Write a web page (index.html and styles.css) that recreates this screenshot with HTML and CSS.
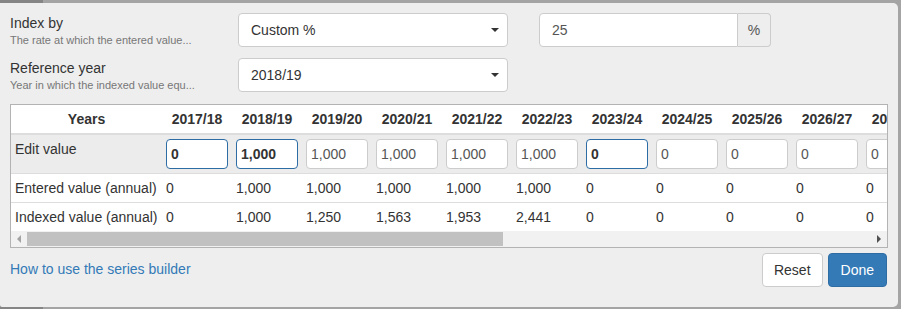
FILE: index.html
```html
<!DOCTYPE html>
<html lang="en">
<head>
    <meta charset="UTF-8">
    <meta name="viewport" content="width=device-width, initial-scale=1.0">
    <title>Series builder</title>
    <link rel="stylesheet" href="styles.css">
</head>
<body>
    <div class="modal">
        <div class="settings">
            <div class="form-row">
                <div class="field-label">
                    <div class="label-title">Index by</div>
                    <div class="label-help">The rate at which the entered value...</div>
                </div>
                <div class="select-box">
                    <select>
                        <option>Custom %</option>
                    </select>
                </div>
                <div class="input-group">
                    <input type="text" class="form-input" value="25">
                    <span class="input-addon">%</span>
                </div>
            </div>
            <div class="form-row">
                <div class="field-label">
                    <div class="label-title">Reference year</div>
                    <div class="label-help">Year in which the indexed value equ...</div>
                </div>
                <div class="select-box">
                    <select>
                        <option>2018/19</option>
                    </select>
                </div>
            </div>
        </div>

        <div class="series-table">
            <div class="table-scroll">
                <table>
                    <thead>
                        <tr>
                            <th class="row-head">Years</th>
                            <th>2017/18</th>
                            <th>2018/19</th>
                            <th>2019/20</th>
                            <th>2020/21</th>
                            <th>2021/22</th>
                            <th>2022/23</th>
                            <th>2023/24</th>
                            <th>2024/25</th>
                            <th>2025/26</th>
                            <th>2026/27</th>
                            <th>2027/28</th>
                        </tr>
                    </thead>
                    <tbody>
                        <tr class="edit-row">
                            <td>Edit value</td>
                            <td><input class="cell-input edited" value="0"></td>
                            <td><input class="cell-input edited" value="1,000"></td>
                            <td><input class="cell-input" value="1,000"></td>
                            <td><input class="cell-input" value="1,000"></td>
                            <td><input class="cell-input" value="1,000"></td>
                            <td><input class="cell-input" value="1,000"></td>
                            <td><input class="cell-input edited" value="0"></td>
                            <td><input class="cell-input" value="0"></td>
                            <td><input class="cell-input" value="0"></td>
                            <td><input class="cell-input" value="0"></td>
                            <td><input class="cell-input" value="0"></td>
                        </tr>
                        <tr>
                            <td>Entered value (annual)</td>
                            <td>0</td>
                            <td>1,000</td>
                            <td>1,000</td>
                            <td>1,000</td>
                            <td>1,000</td>
                            <td>1,000</td>
                            <td>0</td>
                            <td>0</td>
                            <td>0</td>
                            <td>0</td>
                            <td>0</td>
                        </tr>
                        <tr>
                            <td>Indexed value (annual)</td>
                            <td>0</td>
                            <td>1,000</td>
                            <td>1,250</td>
                            <td>1,563</td>
                            <td>1,953</td>
                            <td>2,441</td>
                            <td>0</td>
                            <td>0</td>
                            <td>0</td>
                            <td>0</td>
                            <td>0</td>
                        </tr>
                    </tbody>
                </table>
            </div>
            <div class="scrollbar">
                <span class="scroll-arrow arrow-left"></span>
                <div class="scroll-track">
                    <div class="scroll-thumb"></div>
                </div>
                <span class="scroll-arrow arrow-right"></span>
            </div>
        </div>

        <div class="footer">
            <a href="#" class="help-link">How to use the series builder</a>
            <div class="footer-buttons">
                <button class="btn btn-default">Reset</button>
                <button class="btn btn-primary">Done</button>
            </div>
        </div>
    </div>
</body>
</html>
```

FILE: styles.css
```css
* {
    box-sizing: border-box;
}
body {
    margin: 0;
    font-family: "Liberation Sans", Arial, sans-serif;
    font-size: 14px;
    color: #333;
    background: linear-gradient(to right, #858585 43px, #a4a4a4 43px);
    height: 309px;
    overflow: hidden;
}
.modal {
    margin: 3px 3px 0 0;
    height: 304px;
    background: #eee;
    border-radius: 0 5px 5px 2px;
    padding: 10px 10px 0 10px;
}
.settings {
    margin-bottom: 12px;
}
.form-row {
    display: grid;
    grid-template-columns: 228px 270px 263px;
    margin-bottom: 11px;
}
.form-row:last-child {
    margin-bottom: 0;
}
.label-title {
    font-size: 14px;
    line-height: 20px;
}
.label-help {
    font-size: 11px;
    line-height: 14px;
    color: #777;
}
.select-box {
    position: relative;
}
.select-box select {
    appearance: none;
    -webkit-appearance: none;
    width: 100%;
    height: 34px;
    padding: 0 12px;
    font-family: inherit;
    font-size: 14px;
    color: #333;
    background: #fff;
    border: 1px solid #ccc;
    border-radius: 4px;
    outline: none;
}
.select-box::after {
    content: "";
    position: absolute;
    right: 9px;
    top: 15px;
    border-left: 4px solid transparent;
    border-right: 4px solid transparent;
    border-top: 4px solid #333;
}
.input-group {
    display: flex;
    height: 34px;
    margin-left: 31px;
}
.form-input {
    flex: 1;
    min-width: 0;
    padding: 0 12px;
    font-family: inherit;
    font-size: 14px;
    color: #555;
    border: 1px solid #ccc;
    border-radius: 4px 0 0 4px;
    outline: none;
}
.input-addon {
    width: 33px;
    display: flex;
    align-items: center;
    justify-content: center;
    background: #eee;
    border: 1px solid #ccc;
    border-left: none;
    border-radius: 0 4px 4px 0;
    color: #555;
}
.series-table {
    border: 1px solid #b3b3b3;
    background: #fff;
}
.table-scroll {
    overflow: hidden;
}
table {
    table-layout: fixed;
    width: 921px;
    border-collapse: collapse;
}
th, td {
    width: 70px;
    padding: 4px;
    line-height: 20px;
    font-size: 14px;
    white-space: nowrap;
    text-align: left;
    vertical-align: top;
}
th {
    text-align: center;
    font-weight: bold;
    border-bottom: 2px solid #ddd;
}
th.row-head {
    width: 151px;
}
td {
    border-top: 1px solid #ddd;
}
.edit-row td {
    background: #ececec;
    border-top: none;
    padding-top: 4px;
}
.cell-input {
    display: block;
    width: 62px;
    height: 30px;
    padding: 0 4px;
    font-family: inherit;
    font-size: 14px;
    color: #555;
    background: #fff;
    border: 1px solid #ccc;
    border-radius: 4px;
    outline: none;
}
.cell-input.edited {
    font-weight: bold;
    color: #333;
    border-color: #2e6da4;
}
.scrollbar {
    display: flex;
    align-items: center;
    height: 16px;
    background: #f1f1f1;
}
.scroll-arrow {
    width: 16px;
    height: 16px;
    display: flex;
    align-items: center;
    justify-content: center;
}
.arrow-left::before {
    content: "";
    border-top: 4px solid transparent;
    border-bottom: 4px solid transparent;
    border-right: 4px solid #a3a3a3;
}
.arrow-right::before {
    content: "";
    border-top: 4px solid transparent;
    border-bottom: 4px solid transparent;
    border-left: 4px solid #505050;
}
.scroll-track {
    flex: 1;
    height: 14px;
}
.scroll-thumb {
    width: 476px;
    height: 14px;
    background: #c1c1c1;
}
.footer {
    display: flex;
    justify-content: space-between;
    align-items: center;
    margin-top: 5px;
}
.help-link {
    color: #337ab7;
    text-decoration: none;
    margin-top: -3px;
}
.footer-buttons {
    display: flex;
    gap: 5px;
    margin-right: 1px;
}
.btn {
    height: 34px;
    padding: 0 11px;
    font-family: inherit;
    font-size: 14px;
    border: 1px solid #ccc;
    border-radius: 4px;
    cursor: pointer;
}
.btn-default {
    background: #fff;
    color: #333;
}
.btn-primary {
    background: #337ab7;
    border-color: #2e6da4;
    color: #fff;
    padding: 0 12px;
}
```
